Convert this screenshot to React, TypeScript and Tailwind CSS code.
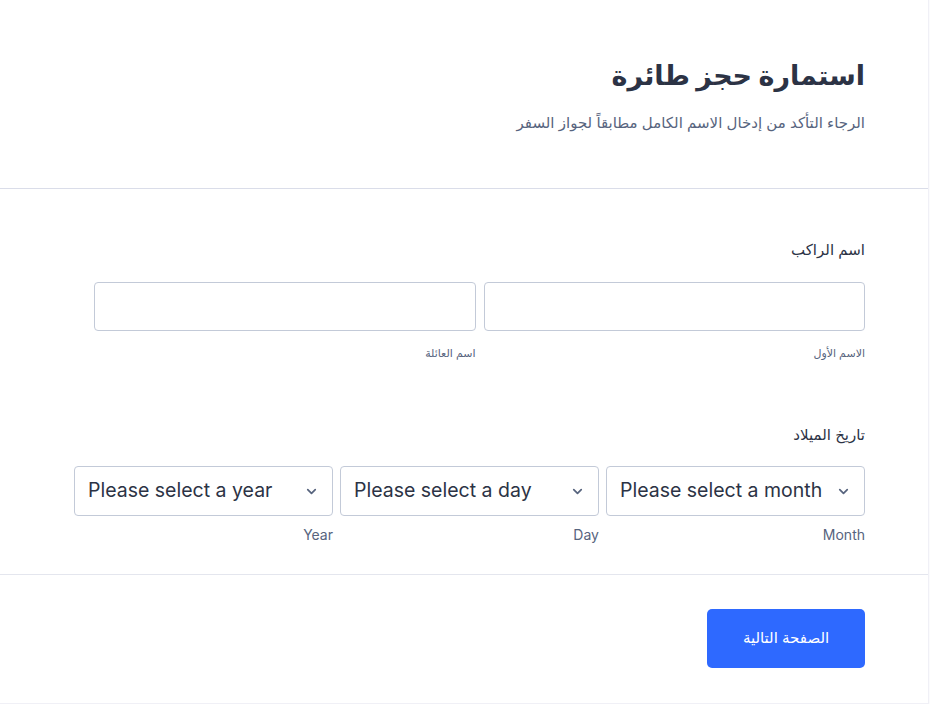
import { ChevronDown } from "lucide-react";

const SelectBox = ({ placeholder, caption }: { placeholder: string; caption: string }) => {
  return (
    <div className="flex flex-col flex-1">
      <div dir="ltr" className="h-[50px] border border-[#c3cad8] rounded-[4px] bg-white flex items-center pl-[13px] pr-[13px]">
        <span className="text-[19.5px] text-[#2c3345] flex-1 whitespace-nowrap">{placeholder}</span>
        <ChevronDown className="w-[15px] h-[15px] text-[#57647e]" strokeWidth={2.75} />
      </div>
      <span className="text-[14px] text-[#57647e] mt-[8px]">{caption}</span>
    </div>
  );
};

export default function App() {
  return (
    <div className="bg-[#fbfbfd] min-h-[704px] font-['Inter','DejaVu_Sans',sans-serif]">
      <div dir="rtl" className="w-[929px] h-[704px] bg-white border-r border-b border-[#f0f0f6] flex flex-col">
        <div className="pt-[56px] pb-[53px] pr-[63px] pl-[64px] border-b border-[#dadde9]">
          <h1 className="text-[27px] font-bold text-[#2c3345] leading-[40px]">استمارة حجز طائرة</h1>
          <p className="text-[15px] text-[#57647e] mt-[16px]">الرجاء التأكد من إدخال الاسم الكامل مطابقاً لجواز السفر</p>
        </div>

        <div className="pr-[63px] pl-[74px] pt-[50px] pb-[29px] border-b border-[#e4e6ee]">
          <label className="block text-[15px] text-[#2c3345]">اسم الراكب</label>
          <div className="flex gap-[8px] mt-[21px] w-[771px]">
            <div className="flex flex-col flex-1">
              <input className="h-[49px] border border-[#c3cad8] rounded-[4px] bg-white" />
              <span className="text-[11px] text-[#57647e] mt-[14px]">الاسم الأول</span>
            </div>
            <div className="flex flex-col flex-1">
              <input className="h-[49px] border border-[#c3cad8] rounded-[4px] bg-white" />
              <span className="text-[11px] text-[#57647e] mt-[14px]">اسم العائلة</span>
            </div>
          </div>

          <label className="block text-[15px] text-[#2c3345] mt-[62px]">تاريخ الميلاد</label>
          <div className="flex gap-[7px] mt-[20px]">
            <SelectBox placeholder="Please select a month" caption="Month" />
            <SelectBox placeholder="Please select a day" caption="Day" />
            <SelectBox placeholder="Please select a year" caption="Year" />
          </div>
        </div>

        <div className="pr-[63px] pt-[34px]">
          <button className="w-[158px] h-[59px] bg-[#2e69ff] rounded-[5px] text-white text-[15px]">الصفحة التالية</button>
        </div>
      </div>
    </div>
  );
}
